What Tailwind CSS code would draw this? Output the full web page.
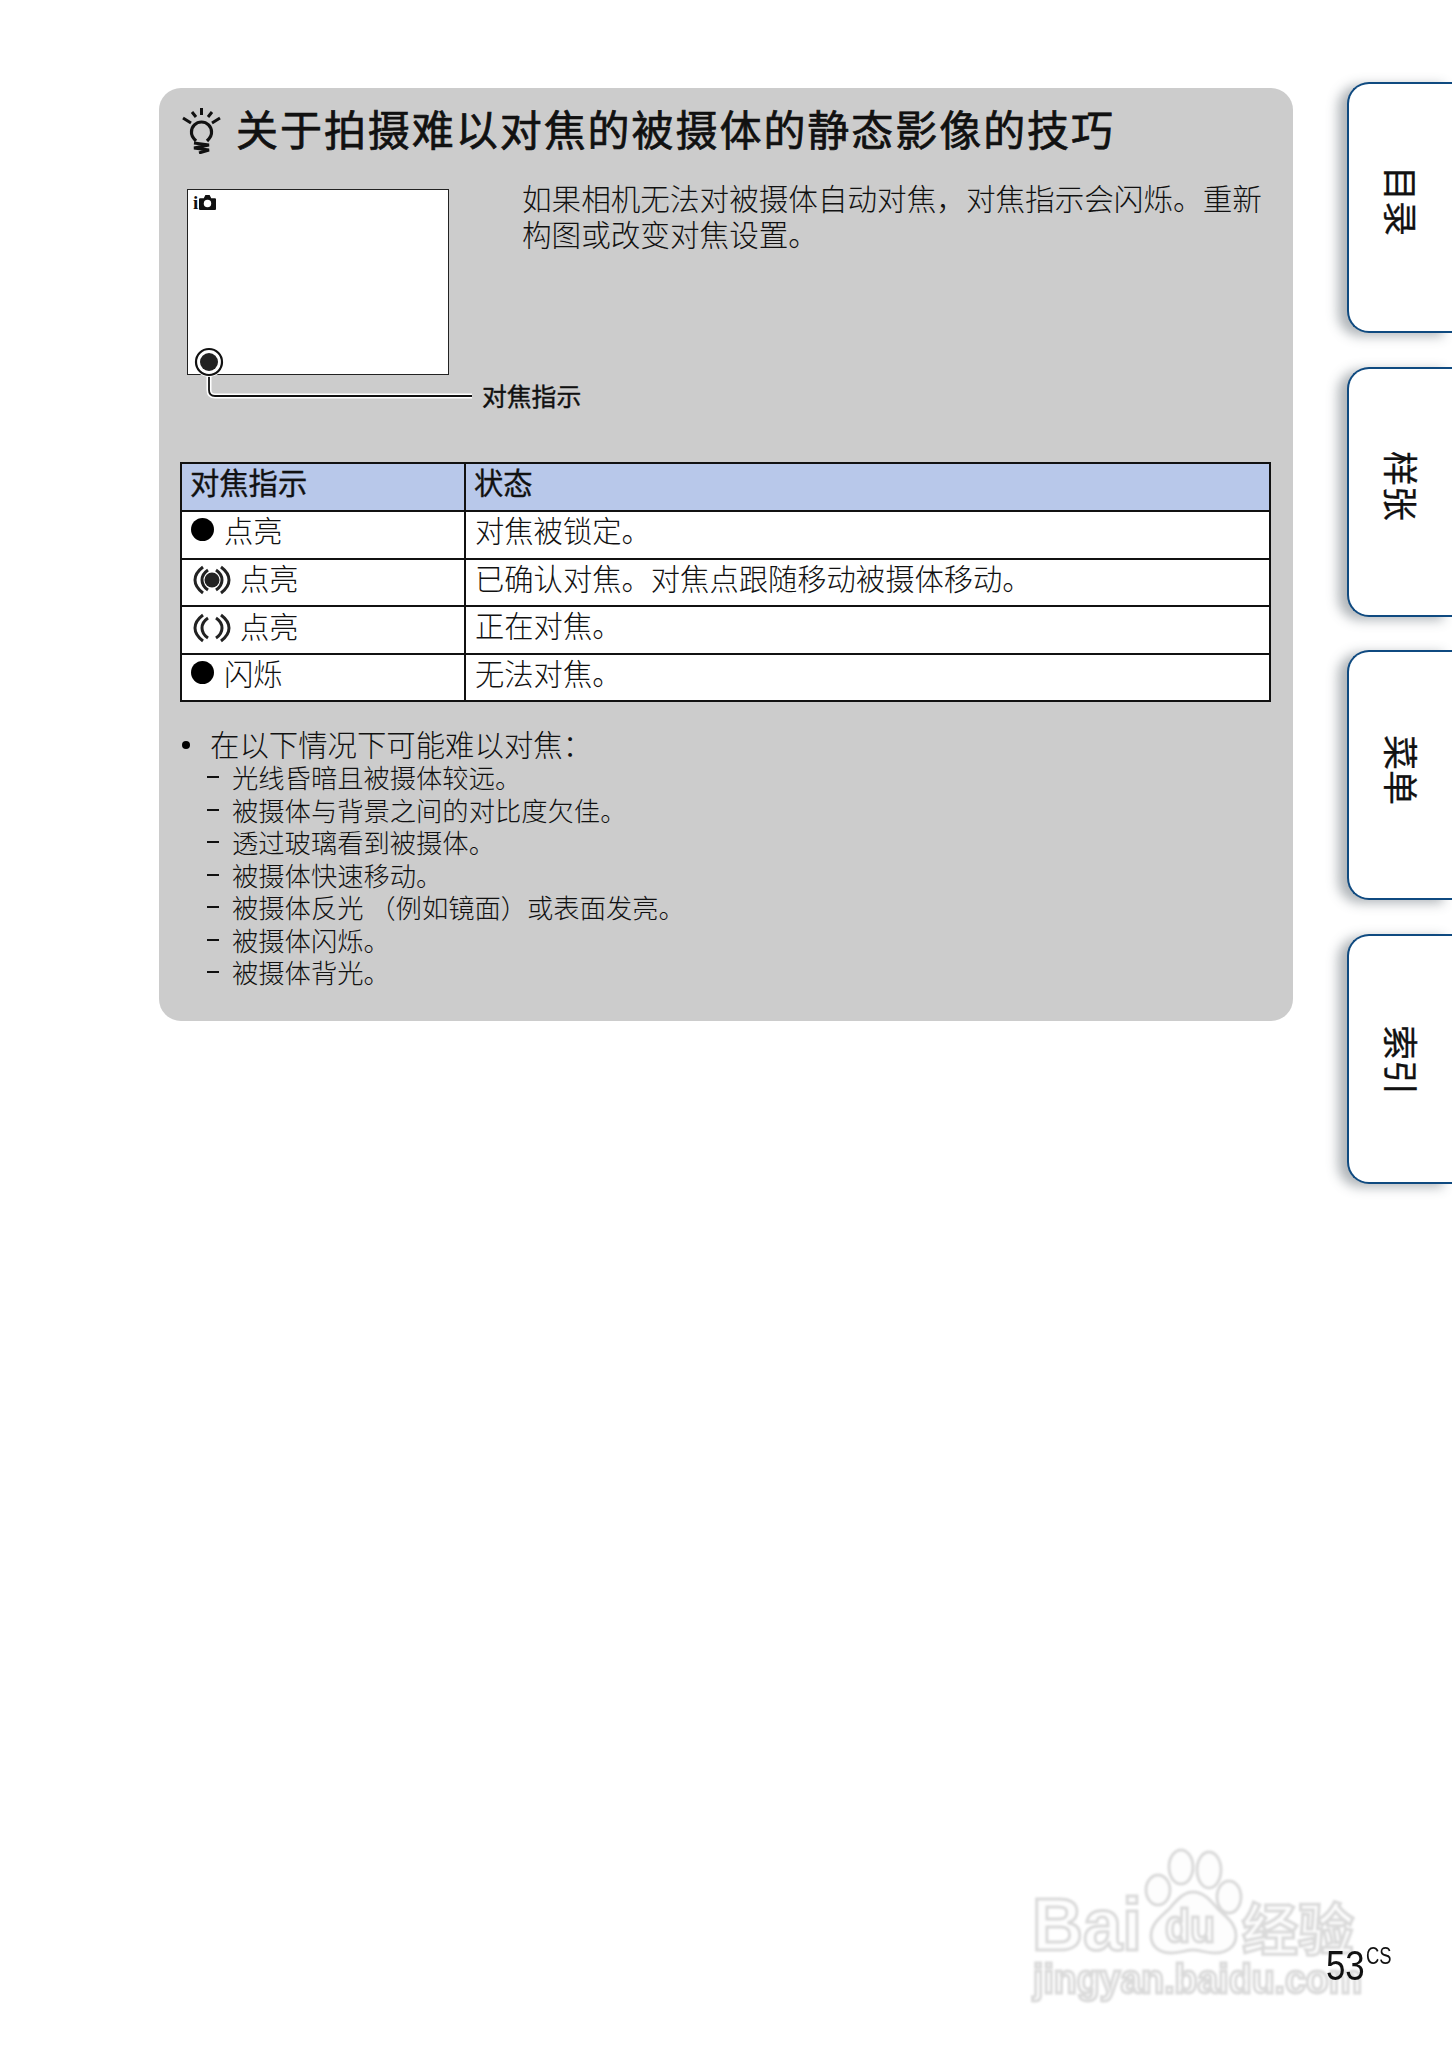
<!DOCTYPE html>
<html lang="zh-CN">
<head>
<meta charset="UTF-8">
<title>关于拍摄难以对焦的被摄体的静态影像的技巧</title>
<script src="https://cdn.jsdelivr.net/npm/@tailwindcss/browser@4"></script>
</head>
<body class="bg-white">
<div class="relative w-[1452px] h-[2064px] overflow-hidden flex flex-col text-[#111] font-['Noto_Sans_CJK_SC','Liberation_Sans',sans-serif]">

  <!-- watermark -->
  <svg class="absolute left-[1020px] top-[1840px] pointer-events-none overflow-visible" width="360" height="170" viewBox="1020 1840 360 170">
    <g fill="#fdfdfd" stroke="#dadada" stroke-width="3" style="filter:blur(0.9px)">
      <ellipse cx="1158" cy="1890" rx="12" ry="15" />
      <ellipse cx="1181" cy="1867" rx="12" ry="17" />
      <ellipse cx="1209" cy="1870" rx="12" ry="18" />
      <ellipse cx="1229" cy="1897" rx="12" ry="16" />
      <path d="M1193 1892c-10 0-17 9-24 17-7 7-18 14-18 27 0 11 9 17 20 17 9 0 15-3 22-3s13 3 22 3c11 0 21-6 21-17 0-13-11-20-18-27-7-8-14-17-25-17z" />
      <text x="1032" y="1950" font-size="74" font-weight="700" textLength="110" lengthAdjust="spacingAndGlyphs" font-family="Liberation Sans">Bai</text>
      <text x="1165" y="1942" font-size="46" font-weight="700" textLength="50" lengthAdjust="spacingAndGlyphs" font-family="Liberation Sans">du</text>
      <text x="1242" y="1950" font-size="56" font-weight="700" font-family="Noto Sans CJK SC">经验</text>
      <text x="1033" y="1993" font-size="40" font-weight="700" textLength="329" lengthAdjust="spacingAndGlyphs" font-family="Liberation Sans">jingyan.baidu.com</text>
    </g>
  </svg>

  <div class="relative flex items-start">
    <!-- panel -->
    <div class="ml-[159px] mt-[88px] w-[1134px] h-[933px] bg-[#cccccc] rounded-[22px] pt-[19px]">
      <div class="flex items-center pl-[22px] h-[47px]">
        <svg width="40" height="47" viewBox="0 0 40 47" class="shrink-0">
          <g fill="none" stroke="#111">
            <path d="M20.500 1v7M11 5l4 5M31 5l-4 5M2 11l8 5M39 11l-8 5" stroke-width="3" />
            <path d="M15 34Q10 29 10.500 25a10 10 0 0 1 20 0Q31 29 26 34" stroke-width="3.200" />
            <path d="M13 36l15 2-15 3 15 2-10 3" stroke-width="3" />
          </g>
        </svg>
        <h1 class="ml-[15px] mb-[6px] text-[42px] leading-[47px] tracking-[1.95px] font-normal [-webkit-text-stroke:0.7px_#111] whitespace-nowrap">关于拍摄难以对焦的被摄体的静态影像的技巧</h1>
      </div>

      <div class="flex mt-[35px] pl-[28px] h-[273px]">
        <div class="relative w-[262px] h-[186px] bg-white border border-[#222] shrink-0">
          <div class="flex items-center gap-[1px] pl-[5px] pt-[1px] h-[24px]">
            <span class="font-['Liberation_Serif',serif] font-bold text-[19px] leading-none">i</span>
            <svg width="17" height="15" viewBox="0 0 16 14"><path fill="#111" d="M1 3h3.500L6 0h4l1.500 3H15a1 1 0 0 1 1 1v9a1 1 0 0 1-1 1H1a1 1 0 0 1-1-1V4a1 1 0 0 1 1-1z"/><circle cx="8" cy="8" r="3.500" fill="#fff"/></svg>
          </div>
          <svg class="absolute left-[4px] top-[155px] overflow-visible" width="290" height="60" viewBox="0 0 290 60">
            <path d="M17 30v15q0 6 6 6h257" fill="none" stroke="#fff" stroke-width="5" />
            <path d="M17 30v15q0 6 6 6h257" fill="none" stroke="#111" stroke-width="1.800" />
            <circle cx="17" cy="17" r="15" fill="#fff" />
            <circle cx="17" cy="17" r="13" fill="#fff" stroke="#111" stroke-width="2.200" />
            <circle cx="17" cy="17" r="9" fill="#222" />
          </svg>
          <span class="absolute left-[294px] top-[190px] text-[24.800px] leading-[30px] font-normal [-webkit-text-stroke:0.4px_#111] whitespace-nowrap">对焦指示</span>
        </div>
        <p class="ml-[73px] mt-[-9px] text-[29.600px] leading-[36px] w-[745px] font-light">如果相机无法对被摄体自动对焦，对焦指示会闪烁。重新构图或改变对焦设置。</p>
      </div>

      <table class="ml-[21px] w-[1091px] table-fixed border-collapse text-[29.300px] font-light">
        <colgroup><col class="w-[284px]"><col></colgroup>
        <thead>
          <tr class="h-[48px] bg-[#b8c8ea] text-left">
            <th class="border-2 border-[#111] pl-[8px] pb-[10px] font-normal [-webkit-text-stroke:0.35px_#111] leading-none">对焦指示</th>
            <th class="border-2 border-[#111] pl-[8px] pb-[10px] font-normal [-webkit-text-stroke:0.35px_#111] leading-none">状态</th>
          </tr>
        </thead>
        <tbody class="bg-white">
          <tr class="h-[47.500px]">
            <td class="border-2 border-[#111] pl-[9px] pb-[10px] leading-none">
              <div class="flex items-center"><span class="w-[23px] h-[23px] rounded-full bg-black"></span><span class="ml-[10px]">点亮</span></div>
            </td>
            <td class="border-2 border-[#111] pl-[9px] pb-[10px] leading-none">对焦被锁定。</td>
          </tr>
          <tr class="h-[47.500px]">
            <td class="border-2 border-[#111] pl-[11px] pb-[4px] leading-none">
              <div class="flex items-center">
                <svg width="38" height="30" viewBox="0 0 38 30">
                  <g fill="none" stroke="#222" stroke-width="3"><path d="M10 2Q2 8 2 15t8 13M15 5q-6 4-6 10t6 10M28 2q8 6 8 13t-8 13M23 5q6 4 6 10t-6 10"/></g>
                  <circle cx="19" cy="15" r="7.500" fill="#222"/>
                </svg>
                <span class="ml-[9px] mb-[5px]">点亮</span>
              </div>
            </td>
            <td class="border-2 border-[#111] pl-[9px] pb-[9px] leading-none">已确认对焦。对焦点跟随移动被摄体移动。</td>
          </tr>
          <tr class="h-[47.500px]">
            <td class="border-2 border-[#111] pl-[11px] pb-[4px] leading-none">
              <div class="flex items-center">
                <svg width="38" height="30" viewBox="0 0 38 30">
                  <g fill="none" stroke="#222" stroke-width="3"><path d="M10 2Q2 8 2 15t8 13M15 5q-6 4-6 10t6 10M28 2q8 6 8 13t-8 13M23 5q6 4 6 10t-6 10"/></g>
                </svg>
                <span class="ml-[9px] mb-[5px]">点亮</span>
              </div>
            </td>
            <td class="border-2 border-[#111] pl-[9px] pb-[10px] leading-none">正在对焦。</td>
          </tr>
          <tr class="h-[47.500px]">
            <td class="border-2 border-[#111] pl-[9px] pb-[10px] leading-none">
              <div class="flex items-center"><span class="w-[23px] h-[23px] rounded-full bg-black"></span><span class="ml-[10px]">闪烁</span></div>
            </td>
            <td class="border-2 border-[#111] pl-[9px] pb-[10px] leading-none">无法对焦。</td>
          </tr>
        </tbody>
      </table>

      <div class="mt-[23px] ml-[22px] font-light">
        <div class="flex items-center text-[29.400px] leading-[36px]">
          <span class="w-[8px] h-[8px] rounded-full bg-black ml-[1px] mt-[3px]"></span>
          <span class="ml-[20px]">在以下情况下可能难以对焦：</span>
        </div>
        <ul class="text-[26.300px] leading-[32.500px] mt-[0px]">
          <li class="flex items-center"><span class="w-[12px] h-[2px] bg-[#111] ml-[26px] mr-[13px]"></span>光线昏暗且被摄体较远。</li>
          <li class="flex items-center"><span class="w-[12px] h-[2px] bg-[#111] ml-[26px] mr-[13px]"></span>被摄体与背景之间的对比度欠佳。</li>
          <li class="flex items-center"><span class="w-[12px] h-[2px] bg-[#111] ml-[26px] mr-[13px]"></span>透过玻璃看到被摄体。</li>
          <li class="flex items-center"><span class="w-[12px] h-[2px] bg-[#111] ml-[26px] mr-[13px]"></span>被摄体快速移动。</li>
          <li class="flex items-center"><span class="w-[12px] h-[2px] bg-[#111] ml-[26px] mr-[13px]"></span>被摄体反光 （例如镜面）或表面发亮。</li>
          <li class="flex items-center"><span class="w-[12px] h-[2px] bg-[#111] ml-[26px] mr-[13px]"></span>被摄体闪烁。</li>
          <li class="flex items-center"><span class="w-[12px] h-[2px] bg-[#111] ml-[26px] mr-[13px]"></span>被摄体背光。</li>
        </ul>
      </div>
    </div>

    <!-- side tabs -->
    <div class="ml-[54px] mt-[82px] w-[105px] flex flex-col gap-[33.500px]">
      <div class="h-[251px] bg-white border-[2.500px] border-r-0 border-[#0f4a80] rounded-l-[22px] shadow-[-9px_3px_12px_rgba(80,90,100,0.45)] pl-[36px] pt-[82px]"><span class="block text-[35px] leading-[35px] [-webkit-text-stroke:0.3px_#111] [writing-mode:vertical-rl] [text-orientation:sideways]">目录</span></div>
      <div class="h-[250px] bg-white border-[2.500px] border-r-0 border-[#0f4a80] rounded-l-[22px] shadow-[-9px_3px_12px_rgba(80,90,100,0.45)] pl-[36px] pt-[82px]"><span class="block text-[35px] leading-[35px] [-webkit-text-stroke:0.3px_#111] [writing-mode:vertical-rl] [text-orientation:sideways]">样张</span></div>
      <div class="h-[250px] bg-white border-[2.500px] border-r-0 border-[#0f4a80] rounded-l-[22px] shadow-[-9px_3px_12px_rgba(80,90,100,0.45)] pl-[36px] pt-[83px]"><span class="block text-[35px] leading-[35px] [-webkit-text-stroke:0.3px_#111] [writing-mode:vertical-rl] [text-orientation:sideways]">菜单</span></div>
      <div class="h-[250px] bg-white border-[2.500px] border-r-0 border-[#0f4a80] rounded-l-[22px] shadow-[-9px_3px_12px_rgba(80,90,100,0.45)] pl-[36px] pt-[89px]"><span class="block text-[35px] leading-[35px] [-webkit-text-stroke:0.3px_#111] [writing-mode:vertical-rl] [text-orientation:sideways]">索引</span></div>
    </div>
  </div>

  <!-- page number -->
  <div class="relative mt-auto mb-[77px] mr-[62px] self-end flex items-start font-['Liberation_Sans',sans-serif] text-[#111]">
    <span class="block text-[42px] leading-[42px] scale-x-[0.83] origin-right">53</span>
    <span class="block text-[23px] leading-[24px] mt-[-1px] ml-[1px] scale-x-[0.8] origin-left w-[24px]">CS</span>
  </div>
</div>
</body>
</html>
